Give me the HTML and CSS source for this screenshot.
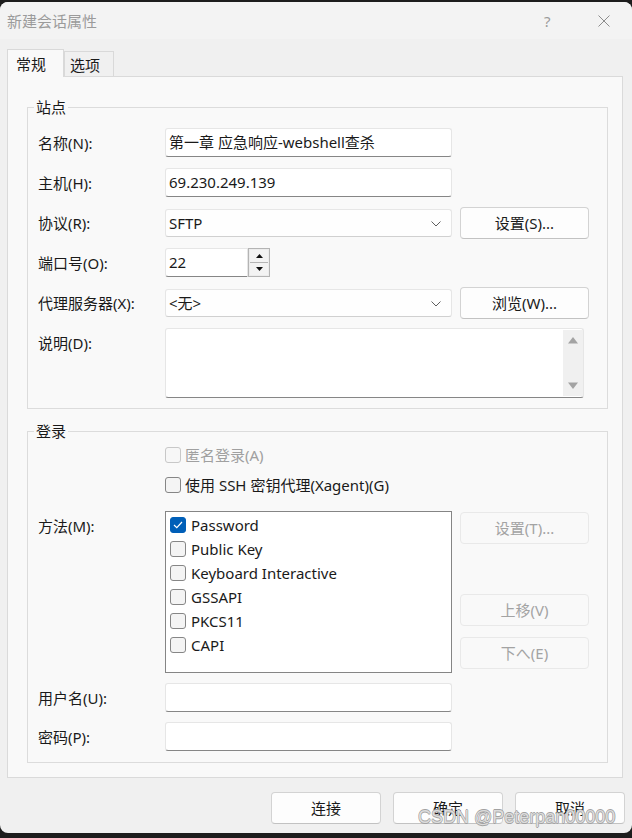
FILE: index.html
```html
<!DOCTYPE html>
<html lang="zh-CN">
<head>
    <meta charset="UTF-8">
    <title>新建会话属性</title>
    <link rel="stylesheet" href="styles.css">
</head>
<body>
    <div class="window">
        <div class="titlebar">
            <span class="title">新建会话属性</span>
            <span class="help">?</span>
            <svg class="close" width="12" height="12" viewBox="0 0 12 12">
                <path d="M0.5 0.5 L11.5 11.5 M11.5 0.5 L0.5 11.5" stroke="#8c8c8c" stroke-width="1" fill="none"/>
            </svg>
        </div>

        <div class="content">
            <div class="tabs">
                <div class="tab active">常规</div>
                <div class="tab">选项</div>
            </div>

            <div class="panel">
                <!-- site group -->
                <fieldset class="group">
                    <legend>站点</legend>
                    <div class="site-grid">
                        <label>名称(N):</label>
                        <div class="field">第一章 应急响应-webshell查杀</div>
                        <span></span>

                        <label>主机(H):</label>
                        <div class="field">69.230.249.139</div>
                        <span></span>

                        <label>协议(R):</label>
                        <div class="field select">
                            SFTP
                            <svg class="chevron" width="10" height="6" viewBox="0 0 10 6"><path d="M0.5 0.5 L5 5 L9.5 0.5" stroke="#5f5f5f" fill="none"/></svg>
                        </div>
                        <button class="btn">设置(S)...</button>

                        <label>端口号(O):</label>
                        <div class="port">
                            <div class="field port-field">22</div>
                            <div class="spinner">
                                <div class="spin up"><svg width="7" height="4" viewBox="0 0 7 4"><path d="M0 4 L3.5 0 L7 4 Z" fill="#111"/></svg></div>
                                <div class="spin"><svg width="7" height="4" viewBox="0 0 7 4"><path d="M0 0 L3.5 4 L7 0 Z" fill="#111"/></svg></div>
                            </div>
                        </div>
                        <span></span>

                        <label>代理服务器(X):</label>
                        <div class="field select">
                            &lt;无&gt;
                            <svg class="chevron" width="10" height="6" viewBox="0 0 10 6"><path d="M0.5 0.5 L5 5 L9.5 0.5" stroke="#5f5f5f" fill="none"/></svg>
                        </div>
                        <button class="btn">浏览(W)...</button>

                        <label class="top">说明(D):</label>
                        <div class="field memo">
                            <div class="scrollbar">
                                <svg width="12" height="8" viewBox="0 0 12 8"><path d="M1 7.5 L6 1 L11 7.5 Z" fill="#a3a3a3"/></svg>
                                <svg width="12" height="8" viewBox="0 0 12 8"><path d="M1 0.5 L6 7 L11 0.5 Z" fill="#a3a3a3"/></svg>
                            </div>
                        </div>
                    </div>
                </fieldset>

                <!-- login group -->
                <fieldset class="group login">
                    <legend>登录</legend>
                    <div class="row check-row">
                        <span></span>
                        <div class="check disabled"><span class="box"></span>匿名登录(A)</div>
                    </div>
                    <div class="row check-row gap8">
                        <span></span>
                        <div class="check"><span class="box"></span>使用 SSH 密钥代理(Xagent)(G)</div>
                    </div>
                    <div class="row method-row">
                        <label class="top">方法(M):</label>
                        <div class="listbox">
                            <div class="item"><span class="box checked"><svg width="10" height="8" viewBox="0 0 10 8"><path d="M1 4 L3.8 6.6 L9 1" stroke="#fff" stroke-width="1.2" fill="none"/></svg></span>Password</div>
                            <div class="item"><span class="box"></span>Public Key</div>
                            <div class="item"><span class="box"></span>Keyboard Interactive</div>
                            <div class="item"><span class="box"></span>GSSAPI</div>
                            <div class="item"><span class="box"></span>PKCS11</div>
                            <div class="item"><span class="box"></span>CAPI</div>
                        </div>
                        <div class="side-buttons">
                            <button class="btn disabled">设置(T)...</button>
                            <button class="btn disabled up-btn">上移(V)</button>
                            <button class="btn disabled">下へ(E)</button>
                        </div>
                    </div>
                    <div class="row field-row">
                        <label>用户名(U):</label>
                        <div class="field"></div>
                    </div>
                    <div class="row field-row">
                        <label>密码(P):</label>
                        <div class="field"></div>
                    </div>
                </fieldset>
            </div>

            <div class="actions">
                <button class="btn wide">连接</button>
                <button class="btn wide">确定</button>
                <button class="btn wide">取消</button>
            </div>
        </div>

        <div class="watermark">CSDN @Peterpan00000</div>
    </div>
</body>
</html>
```

FILE: styles.css
```css
body {
    margin: 0;
    background: #1d1d1d;
    font-family: "Noto Sans", "Noto Sans CJK SC", sans-serif;
    font-size: 15px;
    line-height: 20px;
    color: #1a1a1a;
}
.window {
    /* the dialog itself */
    position: relative;
    margin-top: 2px;
    height: 831px;
    background: #f0f0f0;
    border-radius: 8px;
    overflow: hidden;
}
.titlebar {
    height: 37px;
    background: #f3f3f3;
    display: flex;
    align-items: center;
    padding-left: 7px;
    color: #9b9b9b;
}
.help {
    margin-left: auto;
    width: 12px;
    color: #9b9b9b;
}
.close {
    margin-left: 42px;
    margin-right: 22px;
}
.content {
    padding: 10px 9px 0 7px;
}

/* tabs */
.tabs {
    display: flex;
    align-items: flex-end;
    height: 27px;
}
.tab {
    box-sizing: border-box;
    border: 1px solid #d9d9d9;
    border-bottom: none;
    background: #f0f0f0;
    height: 25px;
    width: 50px;
    padding: 3px 0 0 5px;
}
.tab.active {
    position: relative;
    z-index: 1;
    height: 28px;
    margin-bottom: -1px;
    width: 57px;
    padding: 4px 0 0 8px;
    background: #f9f9f9;
}
.panel {
    border: 1px solid #dadada;
    background: #f9f9f9;
    padding: 20px 14px 14px 19px;
}

/* group boxes */
.group {
    margin: 0;
    border: 1px solid #dcdcdc;
    padding: 11px 17px 10px 10px;
    min-width: 0;
}
.group legend {
    padding: 0 2px;
    margin-left: -4px;
    line-height: 20px;
}
.group.login {
    margin-top: 12px;
    padding-top: 3px;
    padding-bottom: 11px;
}
.site-grid {
    display: grid;
    grid-template-columns: 119px 287px 129px;
    grid-template-rows: repeat(5, 29px) 70px;
    column-gap: 8px;
    row-gap: 11px;
    align-items: center;
}
label.top {
    align-self: start;
    padding-top: 5px;
}

/* fields */
.field {
    box-sizing: border-box;
    height: 29px;
    background: #fff;
    border: 1px solid #e6e6e6;
    border-bottom-color: #868686;
    border-radius: 3px;
    padding: 3px 0 0 3px;
    white-space: nowrap;
}
.select {
    position: relative;
    height: 28px;
    border-bottom-color: #d0d0d0;
    background: #fefefe;
}
.chevron {
    position: absolute;
    right: 10px;
    top: 11px;
}
.port {
    display: flex;
}
.port-field {
    width: 83px;
    border-radius: 3px 0 0 3px;
}
.spinner {
    box-sizing: border-box;
    width: 22px;
    height: 29px;
    border: 1px solid #b4b4b4;
    background: #ececec;
    padding: 1px;
    display: flex;
    flex-direction: column;
}
.spin {
    flex: 1;
    display: flex;
    align-items: center;
    justify-content: center;
    background: #f3f3f3;
}
.spin.up {
    border-bottom: 1px solid #b4b4b4;
}
.memo {
    grid-column: 2 / 4;
    width: 419px;
    height: 70px;
    display: flex;
    justify-content: flex-end;
    padding: 1px 0 0 0;
}
.scrollbar {
    width: 20px;
    height: 66px;
    background: #f0f0f0;
    display: flex;
    flex-direction: column;
    justify-content: space-between;
    align-items: center;
    padding: 6px 0;
    box-sizing: border-box;
}

/* buttons */
.btn {
    box-sizing: border-box;
    height: 32px;
    font: inherit;
    color: #1a1a1a;
    background: #fdfdfd;
    border: 1px solid #d3d3d3;
    border-bottom-color: #c2c2c2;
    border-radius: 4px;
    padding: 0;
}
.btn.disabled {
    background: #f9f9f9;
    border-color: #e9e9e9;
    color: #a3a3a3;
}

/* login rows */
.row {
    display: grid;
    grid-template-columns: 119px 287px 129px;
    column-gap: 8px;
    align-items: center;
}
.check-row {
    height: 22px;
}
.gap8 {
    margin-top: 8px;
}
.check {
    grid-column: 2 / 4;
    display: flex;
    align-items: center;
    gap: 4px;
    white-space: nowrap;
}
.check.disabled {
    color: #a0a0a0;
}
.box {
    box-sizing: border-box;
    width: 16px;
    height: 16px;
    border: 1px solid #868686;
    border-radius: 3px;
    background: #f4f4f4;
    display: flex;
    align-items: center;
    justify-content: center;
}
.check.disabled .box {
    border-color: #c8c8c8;
    background: #f7f7f7;
}
.box.checked {
    background: #005fb8;
    border-color: #005fb8;
}
.method-row {
    margin-top: 15px;
    align-items: start;
}
.listbox {
    box-sizing: border-box;
    height: 162px;
    background: #fff;
    border: 1px solid #858585;
    padding: 1px 0 0 4px;
}
.item {
    height: 24px;
    display: flex;
    align-items: center;
    gap: 5px;
}
.side-buttons {
    display: flex;
    flex-direction: column;
    padding-top: 1px;
}
.up-btn {
    margin-top: 50px;
    margin-bottom: 11px;
}
.field-row {
    margin-top: 10px;
}

/* dialog buttons */
.actions {
    display: flex;
    justify-content: flex-end;
    gap: 12px;
    margin: 14px -2px 0 0;
}
.btn.wide {
    width: 110px;
}
.watermark {
    /* overlay text on top of the buttons */
    position: absolute;
    left: 418px;
    top: 805px;
    font-family: "Liberation Sans", Arial, sans-serif;
    font-size: 18px;
    line-height: 21px;
    color: #dcdcdc;
    text-shadow: 0.6px 0 0 #a2a2a2, -0.6px 0 0 #a2a2a2, 0 0.6px 0 #a2a2a2, 0 -0.6px 0 #a2a2a2;
}
```
